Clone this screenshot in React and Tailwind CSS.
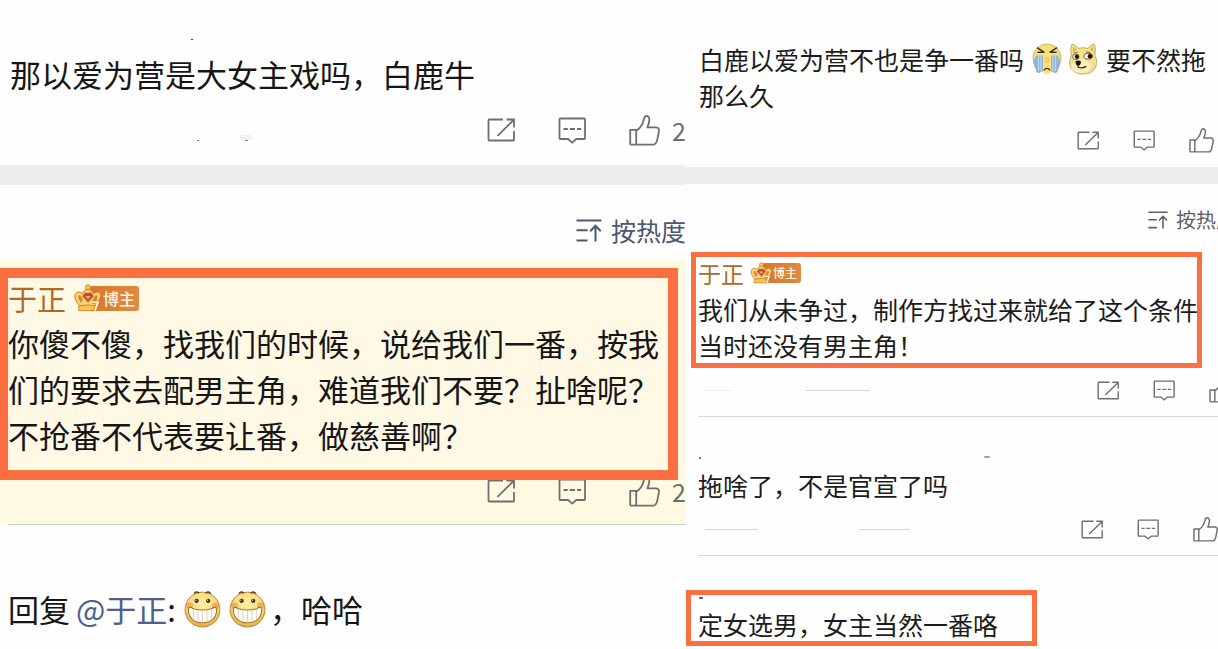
import React from 'react';

/**
 * Line icons. Every icon scales with the width/height classes passed in.
 */
const ShareIcon = ({ className = '' }) => (
  <svg viewBox="0 0 28 24" fill="none" stroke="currentColor" strokeWidth="1.8" className={className}>
    <path d="M16 1.5H2.2Q1.5 1.5 1.5 2.2V21.8Q1.5 22.5 2.2 22.5H26.3Q27 22.5 27 21.8V13" />
    <path d="M19.5 1.5H27V9.5M10.5 17.8L26.6 2" />
  </svg>
);

const CommentIcon = ({ className = '' }) => (
  <svg viewBox="0 0 28 27" fill="none" stroke="currentColor" strokeWidth="1.8" className={className}>
    <path d="M2.2 1.5H26.3Q27 1.5 27 2.2V21.3Q27 22 26.3 22H18.3L14.2 25.6L10.1 22H2.2Q1.5 22 1.5 21.3V2.2Q1.5 1.5 2.2 1.5Z" />
    <path d="M5.5 12H9.8M11.8 12H17M19 12H23.2" />
  </svg>
);

const LikeIcon = ({ className = '' }) => (
  <svg viewBox="0 0 31 31" fill="none" stroke="currentColor" strokeWidth="1.8" strokeLinejoin="round" className={className}>
    <path d="M1.2 14.8H7.2V29.6H2Q1.2 29.6 1.2 28.8Z" />
    <path d="M7.2 15.8C11.2 13.2 13.6 9.6 14.6 5.2C15.2 2.4 16 1 17.6 1C19.6 1 20.5 2.9 20.3 5.2C20.1 7.7 19.3 10.2 18.4 12.4H26.8C29.4 12.4 30.3 14 29.9 16.5L28.4 24.2C27.7 27.9 26.8 29.6 24.2 29.6H7.2" />
  </svg>
);

const SortIcon = ({ className = '' }) => (
  <svg viewBox="0 0 26 23" fill="none" stroke="currentColor" strokeWidth="2" className={className}>
    <path d="M0.5 1.5H25.5M0.5 11.2H11.5M0.5 21.4H11.5" />
    <path d="M19.5 22.5V7M14.2 12.2L19.5 6.8L24.8 12.2" />
  </svg>
);

const CrownIcon = ({ className = '' }) => (
  <svg viewBox="0 0 27 28" className={className}>
    <circle cx="14" cy="3.4" r="2.6" fill="#f8c561" stroke="#cf8524" strokeWidth="0.8" />
    <path d="M5.5 21.5C1 17 0 12 1.6 9.6C3 7.4 6.5 7.8 8.4 9.6C9.6 6.8 11.6 5.4 14 5.4C16.4 5.4 18.4 6.8 19.6 9.6C21.5 7.8 25 7.4 26.2 9.6C27.4 12.4 25.6 17.2 22 21.5Z" fill="#fcd27c" stroke="#c9781f" strokeWidth="1" />
    <path d="M7.4 19C4.4 15.6 3.8 12.8 4.6 11.6C5.6 10.6 8 12.4 9 15.6ZM20.4 19C23.4 15.6 24 12.8 23.2 11.6C22.2 10.6 20 12.4 19 15.6Z" fill="#d8862e" />
    <path d="M10.6 8.6H17.4L20 12.2L14 18.8L8.2 12.2Z" fill="#b7502a" stroke="#f7b65a" strokeWidth="0.9" />
    <path d="M11.2 12H16.6L14 15.6Z" fill="#f0a183" />
    <path d="M4.8 22.2Q13.6 19.4 22.4 22.2V26.6H4.8Z" fill="#f9c34f" stroke="#c9781f" strokeWidth="0.8" />
    <path d="M18.2 18.2H24L20.8 26.6" fill="none" stroke="#c9781f" strokeWidth="3.4" />
    <path d="M18.2 18.2H24L20.8 26.6" fill="none" stroke="#fff3d0" strokeWidth="2" />
  </svg>
);

/**
 * Emoji drawings used inside comment text
 */
const GrinFace = ({ className = '' }) => (
  <svg viewBox="0 0 37 38" role="img" aria-label="哈哈" className={className}>
    <defs>
      <radialGradient id="grinSkin" cx="50%" cy="35%" r="65%">
        <stop offset="0" stopColor="#fdeea6" />
        <stop offset="0.7" stopColor="#f7d872" />
        <stop offset="1" stopColor="#dda94a" />
      </radialGradient>
    </defs>
    <circle cx="18.5" cy="19.6" r="17.4" fill="url(#grinSkin)" stroke="#b98a34" strokeWidth="1" />
    <path d="M10 3.6Q12 0.6 15 3.2M21.6 3.2Q24.4 0.6 26.8 3.6" fill="none" stroke="#5c4318" strokeWidth="1.3" />
    <ellipse cx="5.4" cy="15.6" rx="3.6" ry="3" fill="#ee8a4a" opacity="0.6" />
    <ellipse cx="31.6" cy="15.6" rx="3.6" ry="3" fill="#ee8a4a" opacity="0.6" />
    <circle cx="12.6" cy="10.8" r="2.1" fill="#3d2a10" />
    <circle cx="24.2" cy="10.8" r="2.1" fill="#3d2a10" />
    <circle cx="12" cy="10.2" r="0.6" fill="#fff" />
    <circle cx="23.6" cy="10.2" r="0.6" fill="#fff" />
    <path d="M4.4 18Q7 16.6 8.6 18.4Q18.5 21.6 28.4 18.4Q30 16.6 32.6 18C33.4 27 27.4 32.8 18.5 32.8C9.6 32.8 3.6 27 4.4 18Z" fill="#fffef6" stroke="#a8742a" strokeWidth="1.1" />
    <path d="M9.4 19V29.6M14 20.4V32.2M18.5 20.8V32.6M23 20.4V32.2M27.6 19V29.6" stroke="#cfc9b4" strokeWidth="0.8" />
  </svg>
);

const CryFace = ({ className = '' }) => (
  <svg viewBox="0 0 30 32" role="img" aria-label="泪" className={className}>
    <circle cx="15" cy="15" r="14" fill="#f3df80" stroke="#c9a956" strokeWidth="0.8" />
    <path d="M4.4 12.6H11V27.6C8 31.4 3.4 30.4 4 26.6C1 22 1 17 4.4 12.6Z" fill="#94b3d8" />
    <path d="M25.6 12.6H19V27.6C22 31.4 26.6 30.4 26 26.6C29 22 29 17 25.6 12.6Z" fill="#94b3d8" />
    <path d="M6.6 12.6V28M9 12.6V28.6M21 12.6V28.6M23.6 12.6V28" stroke="#c4d9ef" strokeWidth="1.1" />
    <path d="M11 11H19V29.6Q15 32.6 11 29.6Z" fill="#f8e47c" />
    <path d="M12.4 14H17.6V20H12.4Z" fill="#f4bb58" opacity="0.6" />
    <path d="M5 4.6L12.4 9.4M25 4.6L17.6 9.4M5.4 9.4L12 9M24.6 9.4L18 9" fill="none" stroke="#3b2c1c" strokeWidth="1.3" />
    <path d="M11.8 27.4Q15 23.4 18.2 27.4" fill="none" stroke="#5c2e14" strokeWidth="1.4" />
  </svg>
);

const DogeFace = ({ className = '' }) => (
  <svg viewBox="0 0 30 32" role="img" aria-label="doge" className={className}>
    <path d="M3.4 13C2.4 8 2.6 3 4 1.2C6 1 9 3.6 10.4 5.4Q15 4 20 5.4C21.6 3 24.4 0.8 26.2 1C27.6 3.4 27.6 8 26.8 12C31.4 21 27 31 15.4 31C3 31 -1 21.6 3.4 13Z" fill="#f5e08c" stroke="#c2a25a" strokeWidth="0.9" />
    <path d="M5 3.4L8.4 6.6L5 9.6ZM25.2 3.2L22 6.2L25.4 9Z" fill="#dcb766" />
    <ellipse cx="13" cy="23.5" rx="10" ry="6.4" fill="#fbf0bd" />
    <path d="M5.6 10L9.8 9.2M18 8.8L22.6 9.6" stroke="#a47a34" strokeWidth="1.2" />
    <ellipse cx="7.8" cy="13.8" rx="3.2" ry="2.7" fill="#fff" stroke="#4b371c" strokeWidth="0.8" />
    <ellipse cx="20.2" cy="13.2" rx="4.2" ry="2.9" fill="#fff" stroke="#4b371c" strokeWidth="0.8" />
    <circle cx="8.8" cy="13.8" r="2.1" fill="#201509" />
    <circle cx="22" cy="13.2" r="2.3" fill="#201509" />
    <path d="M7.4 18.4Q10.4 16.6 13 18.4Q12.8 22.6 10.2 22.8Q7.6 22.2 7.4 18.4Z" fill="#1c120a" />
    <path d="M10.2 22.4V24.2Q13.6 25.8 18.4 23.4" fill="none" stroke="#3a2814" strokeWidth="1.2" />
  </svg>
);

/**
 * Actions - share / comment / like buttons under a comment
 */
const Actions = ({ large = false, count, className = '' }) => (
  <div className={`flex shrink-0 items-center text-[#6f6f6f] ${large ? 'h-8 gap-[43px]' : 'h-6 gap-[34px]'} ${className}`}>
    <button type="button" aria-label="转发">
      <ShareIcon className={large ? 'h-6 w-7' : 'h-[19px] w-[22px]'} />
    </button>
    <button type="button" aria-label="评论">
      <CommentIcon className={large ? 'h-[27px] w-7' : 'h-[21px] w-[22px]'} />
    </button>
    <button type="button" aria-label="赞" className="flex items-center gap-3">
      <LikeIcon className={large ? 'h-[31px] w-[31px]' : 'h-[25px] w-[25px]'} />
      {count && <span className="text-[25px] leading-7">{count}</span>}
    </button>
  </div>
);

/**
 * Author - name of the blogger with the crown badge
 */
const Author = ({ large = false }) => (
  <div className={`mb-[2px] flex items-center ${large ? 'h-10 gap-2 text-[29px]' : 'h-8 gap-[6px] text-[23px]'}`}>
    <a href="#author" className="leading-none text-[#ad6a2b]">于正</a>
    <span className="flex items-center">
      <CrownIcon className={`relative z-10 ${large ? 'h-7 w-[27px]' : 'h-[22px] w-[22px]'}`} />
      <span
        className={`flex items-center rounded-[3px] bg-linear-to-r from-[#d9772b] to-[#e08a42] font-medium text-[#fff6e6] ${
          large ? '-ml-3 h-[25px] pr-1 pl-[14px] text-[16px]' : '-ml-[10px] h-5 pr-1 pl-[11px] text-[12px]'
        }`}
      >
        博主
      </span>
    </span>
  </div>
);

const SortButton = ({ large = false, className = '' }) => (
  <button
    type="button"
    className={`flex shrink-0 items-center whitespace-nowrap ${
      large ? 'gap-[9px] text-[25px] leading-8 text-[#4b586e]' : 'gap-2 text-[20px] leading-6 text-[#5a5f69]'
    } ${className}`}
  >
    <SortIcon className={large ? 'h-[23px] w-[26px]' : 'h-[18px] w-5'} />
    按热度
  </button>
);

const Line = ({ children }) => <span className="block whitespace-nowrap">{children}</span>;

// Tiny mark left over on the page background
const Speck = ({ className = '' }) => <span aria-hidden="true" className={`absolute rounded-full ${className}`} />;

const LeftThread = () => (
  <section className="min-w-0 overflow-hidden text-[31px] leading-[46px] text-[#161616]">
    <div className="relative pt-[51px] pb-[19px]">
      <Speck className="top-[39px] left-[191px] h-px w-[2px] bg-[#222]" />
      <Speck className="top-[140px] left-[197px] h-px w-[2px] bg-[#666]" />
      <Speck className="top-[135px] left-[240px] h-[5px] w-3 bg-[#f1f1f1]" />
      <Speck className="top-[140px] left-[245px] h-px w-[3px] bg-[#777]" />
      <p className="pl-[10px]">
        <Line>那以爱为营是大女主戏吗，白鹿牛</Line>
      </p>
      <Actions large count="2" className="mt-[17px] justify-end" />
    </div>
    <div className="h-5 bg-[#eeeeee]" />
    <div className="flex justify-end pt-[29px] pb-[14px]">
      <SortButton large />
    </div>

    <article className="bg-[#fefae2] pt-2">
      <div className="relative z-10 mr-2 border-y-10 border-r-10 border-l-8 border-[#fb6f40] bg-[#fff8e5] pb-3">
        <Author large />
        <p>
          <Line>你傻不傻，找我们的时候，说给我们一番，按我</Line>
          <Line>们的要求去配男主角，难道我们不要？扯啥呢？</Line>
          <Line>不抢番不代表要让番，做慈善啊？</Line>
        </p>
      </div>
      <Actions large count="2" className="-mt-[5px] justify-end" />
      <div className="mt-[17px] ml-2 h-px bg-[#cfcfc9]" />
    </article>

    <p className="flex items-center pt-[61px] pl-2 whitespace-nowrap">
      回复
      <a href="#author" className="ml-[6px] text-[#4f6189]">@于正</a>
      :
      <GrinFace className="ml-2 h-[38px] w-[37px] shrink-0" />
      <GrinFace className="ml-2 h-[38px] w-[37px] shrink-0" />
      <span className="ml-1">，哈哈</span>
    </p>
  </section>
);

const RightThread = () => (
  <section className="min-w-0 overflow-hidden text-[25px] leading-9 text-[#1c1c1c]">
    <div className="pt-[41px] pb-[15px]">
      <div className="pl-[13px]">
        <div className="flex items-center whitespace-nowrap">
          白鹿以爱为营不也是争一番吗
          <CryFace className="ml-2 h-8 w-[30px] shrink-0" />
          <DogeFace className="ml-[6px] h-8 w-[30px] shrink-0" />
          <span className="ml-2">要不然拖</span>
        </div>
        <Line>那么久</Line>
      </div>
      <Actions className="mt-[15px] justify-end pr-1" />
    </div>
    <div className="h-[17px] bg-[#eeeeee]" />
    <div className="flex justify-end pt-6 pb-5">
      <SortButton className="-mr-[18px]" />
    </div>

    <article>
      <div className="mr-4 ml-[5px] border-5 border-[#fb6f40] pl-[2px]">
        <Author />
        <Line>我们从未争过，制作方找过来就给了这个条件</Line>
        <Line>当时还没有男主角！</Line>
      </div>
      <div className="mt-[10px] flex items-center justify-between pb-[14px] pl-[19px]">
        <div className="flex items-center gap-[73px]">
          <span className="h-px w-7 bg-[#f0f0f0]" />
          <span className="h-px w-16 bg-[#d4d4d4]" />
        </div>
        <Actions className="-mr-4" />
      </div>
      <div className="ml-3 h-px bg-[#d8d8d8]" />
    </article>

    <article className="relative pt-[50px]">
      <Speck className="top-10 left-[13px] h-[2px] w-[2px] bg-[#444]" />
      <Speck className="top-[39px] left-[298px] h-[2px] w-[6px] bg-[#7fa5e0]" />
      <p className="pl-3">
        <Line>拖啥了，不是官宣了吗</Line>
      </p>
      <div className="mt-[14px] flex items-center justify-between pb-[14px] pl-[19px]">
        <div className="flex items-center gap-[101px]">
          <span className="h-px w-[53px] bg-[#d4d4d4]" />
          <span className="h-px w-[51px] bg-[#d4d4d4]" />
        </div>
        <Actions />
      </div>
      <div className="ml-3 h-px bg-[#d8d8d8]" />
    </article>

    <div className="relative mt-[34px] w-[351px] max-w-full border-5 border-[#fb6f40] pt-[15px] pb-[3px] pl-[7px] leading-7">
      <Speck className="top-[2px] left-2 h-[2px] w-1 bg-[#555]" />
      <Line>定女选男，女主当然一番咯</Line>
    </div>
  </section>
);

export default function App() {
  return (
    <main className="grid min-h-screen grid-cols-[686fr_532fr] overflow-hidden bg-[#fefefe] font-['Noto_Sans_CJK_SC',sans-serif] font-normal">
      <LeftThread />
      <RightThread />
    </main>
  );
}
